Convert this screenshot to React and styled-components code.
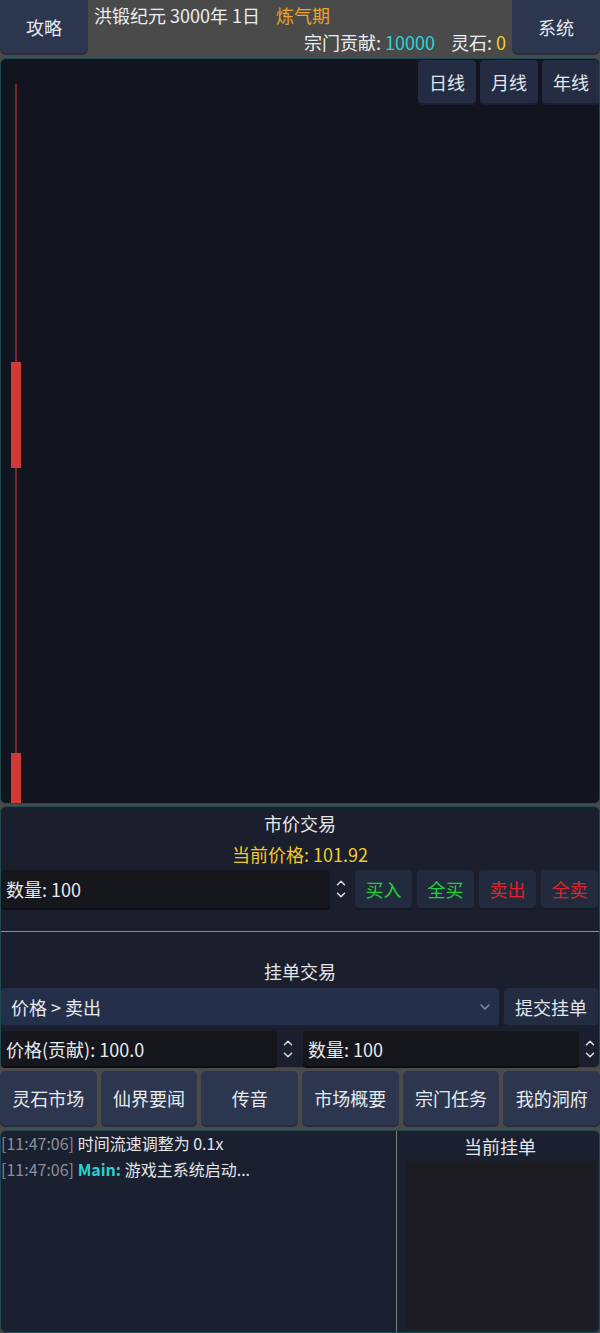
import React from "react";
import styled, { createGlobalStyle } from "styled-components";
import { ChevronUp, ChevronDown } from "lucide-react";

const GlobalStyle = createGlobalStyle`
  html, body {
    margin: 0;
    padding: 0;
    background: #4a4a4a;
  }
  body {
    font-family: "Noto Sans CJK SC", "Noto Sans", sans-serif;
    color: #e4e6ea;
  }
  * {
    box-sizing: border-box;
  }
`;

const candles = [
  { wickTop: 25, wickBottom: 692, top: 303, bottom: 409 },
  { wickTop: 692, wickBottom: 744, top: 694, bottom: 744 },
];

const navItems = ["灵石市场", "仙界要闻", "传音", "市场概要", "宗门任务", "我的洞府"];

const logs = [
  { time: "11:47:06", text: "时间流速调整为 0.1x" },
  { time: "11:47:06", source: "Main", text: "游戏主系统启动..." },
];

export default function App() {
  return (
    <>
      <GlobalStyle />
      <Page>
        <TopBar>
          <TopButton>攻略</TopButton>
          <Status>
            <StatusLine>
              洪锻纪元 3000年 1日<Realm>炼气期</Realm>
            </StatusLine>
            <StatusLine $right>
              宗门贡献: <Value $color="#27d6d6">10000</Value>
              <Gap />灵石: <Value $color="#f2cf2c">0</Value>
            </StatusLine>
          </Status>
          <TopButton>系统</TopButton>
        </TopBar>

        <ChartPanel>
          <ChartCanvas viewBox="0 0 598 744" preserveAspectRatio="none">
            {candles.map((c, i) => (
              <g key={i}>
                <line x1="15" x2="15" y1={c.wickTop} y2={c.wickBottom} stroke="#e03a3a" strokeWidth="1" />
                <rect x="10" y={c.top} width="10" height={c.bottom - c.top} fill="#d23a35" />
              </g>
            ))}
          </ChartCanvas>
          <PeriodBar>
            <PeriodButton>日线</PeriodButton>
            <PeriodButton>月线</PeriodButton>
            <PeriodButton>年线</PeriodButton>
          </PeriodBar>
        </ChartPanel>

        <TradePanel>
          <SectionTitle>市价交易</SectionTitle>
          <Price>当前价格: 101.92</Price>
          <TradeRow>
            <NumberField>
              <Input>数量: 100</Input>
              <Spinner>
                <ChevronUp size={14} strokeWidth={2.5} />
                <ChevronDown size={14} strokeWidth={2.5} />
              </Spinner>
            </NumberField>
            <ActionButton $color="#22d13a">买入</ActionButton>
            <ActionButton $color="#22d13a">全买</ActionButton>
            <ActionButton $color="#e0242a">卖出</ActionButton>
            <ActionButton $color="#e0242a">全卖</ActionButton>
          </TradeRow>
          <Separator />
          <SectionTitle $top={27}>挂单交易</SectionTitle>
          <OrderRow>
            <Select>
              价格 &gt; 卖出
              <ChevronDown size={16} color="#8890a4" />
            </Select>
            <SubmitButton>提交挂单</SubmitButton>
          </OrderRow>
          <InputRow>
            <NumberField>
              <Input>价格(贡献): 100.0</Input>
              <Spinner>
                <ChevronUp size={14} strokeWidth={2.5} />
                <ChevronDown size={14} strokeWidth={2.5} />
              </Spinner>
            </NumberField>
            <NumberField>
              <Input>数量: 100</Input>
              <Spinner>
                <ChevronUp size={14} strokeWidth={2.5} />
                <ChevronDown size={14} strokeWidth={2.5} />
              </Spinner>
            </NumberField>
          </InputRow>
        </TradePanel>

        <NavBar>
          {navItems.map((n) => (
            <NavButton key={n}>{n}</NavButton>
          ))}
        </NavBar>

        <BottomPanel>
          <LogArea>
            {logs.map((l, i) => (
              <LogLine key={i}>
                <Time>[{l.time}]</Time>{" "}
                {l.source && <Source>{l.source}: </Source>}
                {l.text}
              </LogLine>
            ))}
          </LogArea>
          <OrdersArea>
            <OrdersTitle>当前挂单</OrdersTitle>
            <OrdersList />
          </OrdersArea>
        </BottomPanel>
      </Page>
    </>
  );
}

const Page = styled.div`
  width: 600px;
  height: 1333px;
  display: flex;
  flex-direction: column;
  background: #4a4a4a;
  overflow: hidden;
`;

const TopBar = styled.div`
  height: 55px;
  display: flex;
  align-items: flex-start;
`;

const TopButton = styled.div`
  width: 88px;
  height: 53px;
  display: flex;
  align-items: center;
  justify-content: center;
  background: #2c364e;
  border-radius: 0 0 6px 6px;
  box-shadow: 0 2px 0 #262d3e;
  font-size: 18px;
  color: #e8eaee;
`;

const Status = styled.div`
  flex: 1;
  display: flex;
  flex-direction: column;
  padding: 2px 6px 0 6px;
`;

const StatusLine = styled.div`
  height: 27px;
  line-height: 27px;
  font-size: 18px;
  color: #eceef0;
  white-space: nowrap;
  text-align: ${(p) => (p.$right ? "right" : "left")};
`;

const Realm = styled.span`
  color: #f0a326;
  margin-left: 16px;
`;

const Value = styled.span`
  color: ${(p) => p.$color};
`;

const Gap = styled.span`
  display: inline-block;
  width: 16px;
`;

const ChartPanel = styled.div`
  position: relative;
  margin-top: 3px;
  height: 746px;
  background: #121420;
  border: 1px solid #1f4a50;
  border-radius: 6px;
  overflow: hidden;
`;

const ChartCanvas = styled.svg`
  display: block;
  width: 100%;
  height: 100%;
`;

const PeriodBar = styled.div`
  position: absolute;
  top: 1px;
  right: -1px;
  display: flex;
  gap: 4px;
`;

const PeriodButton = styled.div`
  width: 58px;
  height: 43px;
  display: flex;
  align-items: center;
  justify-content: center;
  background: #232c42;
  border-radius: 4px;
  box-shadow: 0 2px 0 #1a2030;
  font-size: 18px;
  color: #e4e6ea;
`;

const TradePanel = styled.div`
  margin-top: 2px;
  height: 262px;
  display: flex;
  flex-direction: column;
  padding-top: 4px;
  background: #1b1e2c;
  border: 1px solid #1f4a50;
  border-radius: 6px;
`;

const SectionTitle = styled.div`
  margin-top: ${(p) => p.$top || 0}px;
  height: 24px;
  line-height: 24px;
  text-align: center;
  font-size: 18px;
  color: #e4e6ea;
`;

const Price = styled.div`
  margin-top: 7px;
  height: 24px;
  line-height: 24px;
  text-align: center;
  font-size: 18px;
  color: #f2cc25;
`;

const TradeRow = styled.div`
  margin-top: 4px;
  height: 38px;
  display: flex;
  gap: 5px;
  padding-right: 1px;
`;

const NumberField = styled.div`
  flex: 1;
  display: flex;
  gap: 2px;
  min-width: 0;
`;

const Input = styled.div`
  flex: 1;
  display: flex;
  align-items: center;
  padding-left: 5px;
  background: #16171d;
  border-radius: 4px;
  box-shadow: 0 2px 0 #0c0d12;
  font-size: 18px;
  color: #e8eaee;
  white-space: nowrap;
`;

const Spinner = styled.div`
  width: 18px;
  display: flex;
  flex-direction: column;
  align-items: center;
  justify-content: center;
  color: #e0e2e6;
  & svg {
    margin: -1px 0;
  }
`;

const ActionButton = styled.div`
  width: 57px;
  display: flex;
  align-items: center;
  justify-content: center;
  background: #222a3d;
  border-radius: 4px;
  box-shadow: 0 2px 0 #161b27;
  font-size: 18px;
  color: ${(p) => p.$color};
`;

const Separator = styled.div`
  margin-top: 23px;
  height: 1px;
  background: #8a8d94;
`;

const OrderRow = styled.div`
  margin-top: 5px;
  height: 37px;
  display: flex;
  gap: 5px;
  padding-right: 1px;
`;

const Select = styled.div`
  flex: 1;
  display: flex;
  align-items: center;
  justify-content: space-between;
  padding: 0 6px 0 10px;
  background: #243049;
  border-radius: 4px;
  box-shadow: 0 2px 0 #1a2236;
  font-size: 18px;
  color: #e8eaee;
`;

const SubmitButton = styled.div`
  width: 94px;
  display: flex;
  align-items: center;
  justify-content: center;
  background: #232c42;
  border-radius: 4px;
  box-shadow: 0 2px 0 #1a2030;
  font-size: 18px;
  color: #e4e6ea;
`;

const InputRow = styled.div`
  margin-top: 6px;
  height: 35px;
  display: flex;
  gap: 6px;
`;

const NavBar = styled.div`
  margin-top: 3px;
  height: 54px;
  display: flex;
  gap: 4px;
`;

const NavButton = styled.div`
  flex: 1;
  display: flex;
  align-items: center;
  justify-content: center;
  background: #2c364e;
  border-radius: 5px;
  box-shadow: 0 2px 0 #262d3e;
  font-size: 18px;
  color: #e8eaee;
  white-space: nowrap;
`;

const BottomPanel = styled.div`
  margin-top: 5px;
  flex: 1;
  display: flex;
  background: #1b2030;
  border: 1px solid #1f4a50;
  border-radius: 6px;
  overflow: hidden;
`;

const LogArea = styled.div`
  width: 396px;
  padding-top: 1px;
  border-right: 1px solid #7a7d84;
`;

const LogLine = styled.div`
  height: 26px;
  line-height: 22px;
  font-size: 16px;
  color: #e4e6ea;
  white-space: nowrap;
`;

const Time = styled.span`
  color: #8a8f9a;
`;

const Source = styled.span`
  color: #2ccfcf;
  font-weight: 600;
`;

const OrdersArea = styled.div`
  flex: 1;
  display: flex;
  flex-direction: column;
  padding: 0 4px 3px 8px;
`;

const OrdersTitle = styled.div`
  height: 30px;
  line-height: 30px;
  text-align: center;
  font-size: 18px;
  color: #e4e6ea;
`;

const OrdersList = styled.div`
  flex: 1;
  background: #1c1c21;
  border-radius: 3px;
`;
